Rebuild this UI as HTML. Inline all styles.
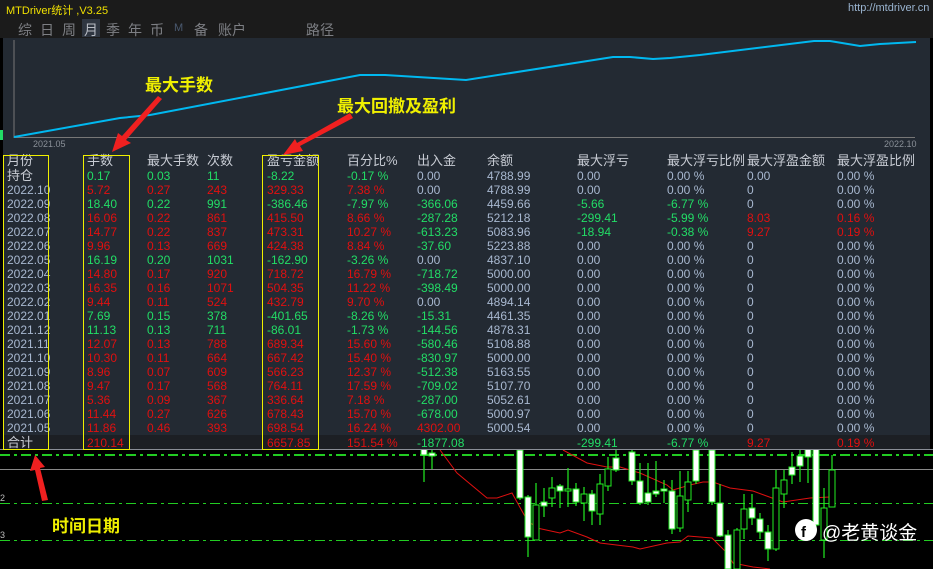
<!DOCTYPE html>
<html><head><meta charset="utf-8"><style>
*{margin:0;padding:0;box-sizing:border-box}
body{width:933px;height:569px;overflow:hidden;background:#000;font-family:"Liberation Sans","Noto Sans CJK SC",sans-serif;position:relative}
.top{position:absolute;left:0;top:0;width:933px;height:38px;background:#1b1b1b}
.panel{position:absolute;left:3px;top:38px;width:927px;height:412px;background:#232a33}
.title{position:absolute;left:6px;top:2px;color:#f0e000;font-size:11px}
.url{position:absolute;left:848px;top:2px;color:#9ab4d0;font-size:11px}
.tab{position:absolute;top:20px;color:#7d7f84;font-size:14px}
.r{position:absolute;left:0;height:14px;width:930px;font-size:12px;line-height:14px;color:#a8b8d0}
.r span{position:absolute;top:0;white-space:nowrap}
.r span:nth-child(1){left:7px}.r span:nth-child(2){left:87px}.r span:nth-child(3){left:147px}
.r span:nth-child(4){left:207px}.r span:nth-child(5){left:267px}.r span:nth-child(6){left:347px}
.r span:nth-child(7){left:417px}.r span:nth-child(8){left:487px}.r span:nth-child(9){left:577px}
.r span:nth-child(10){left:667px}.r span:nth-child(11){left:747px}.r span:nth-child(12){left:837px}
.h{font-size:13px;color:#c8ccd4}
.g{color:#22dd66}.d{color:#e01010}
.g span{color:#22dd66}.d span{color:#e01010}
.r span.b{color:#a8b8d0}.r span.g{color:#22dd66}.r span.d{color:#e01010}
.box{position:absolute;border:1px solid #f0f000}
.ann{position:absolute;color:#f0f000;font-size:17px;font-weight:bold}
</style></head><body>
<div class="top"></div>
<div class="title">MTDriver统计 ,V3.25</div>
<div class="url">http://mtdriver.cn</div>
<div style="position:absolute;left:82px;top:19px;width:18px;height:18px;background:#2f3641"></div>
<span class="tab" style="left:18px">综</span><span class="tab" style="left:40px">日</span><span class="tab" style="left:62px">周</span><span class="tab" style="left:84px;color:#b8bcc4">月</span><span class="tab" style="left:106px">季</span><span class="tab" style="left:128px">年</span><span class="tab" style="left:150px">币</span><span class="tab" style="left:174px;font-size:11px;top:22px;color:#4a5a70">M</span><span class="tab" style="left:194px">备</span><span class="tab" style="left:218px">账户</span><span class="tab" style="left:306px">路径</span>
<div class="panel"></div>
<div style="position:absolute;left:0;top:130px;width:3px;height:10px;background:#22dd66"></div>
<svg style="position:absolute;left:0;top:0" width="933" height="569">
<line x1="14" y1="40" x2="14" y2="138" stroke="#777" stroke-width="1"/>
<line x1="14" y1="137.5" x2="915" y2="137.5" stroke="#777" stroke-width="1"/>
<polyline fill="none" stroke="#00b8f0" stroke-width="2" points="14,137 120,118 150,115 360,75 385,75 466,80 613,57 630,57 653,59 670,58 700,55 814,41 830,41 860,46 880,44 916,42"/>
<text x="33" y="147" fill="#8a9098" font-size="9" font-family="Liberation Sans">2021.05</text>
<text x="884" y="147" fill="#8a9098" font-size="9" font-family="Liberation Sans">2022.10</text>
</svg>
<div class="r h" style="top:154px"><span>月份</span><span>手数</span><span>最大手数</span><span>次数</span><span>盈亏金额</span><span>百分比%</span><span>出入金</span><span>余额</span><span>最大浮亏</span><span>最大浮亏比例</span><span>最大浮盈金额</span><span>最大浮盈比例</span></div>
<div class="r g" style="top:169px"><span class="b" style="font-size:13px;color:#c8ccd4">持仓</span><span>0.17</span><span>0.03</span><span>11</span><span>-8.22</span><span>-0.17 %</span><span class="b">0.00</span><span class="b">4788.99</span><span class="b">0.00</span><span class="b">0.00 %</span><span class="b">0.00</span><span class="b">0.00 %</span></div>
<div class="r d" style="top:183px"><span class="b">2022.10</span><span>5.72</span><span>0.27</span><span>243</span><span>329.33</span><span>7.38 %</span><span class="b">0.00</span><span class="b">4788.99</span><span class="b">0.00</span><span class="b">0.00 %</span><span class="b">0</span><span class="b">0.00 %</span></div>
<div class="r g" style="top:197px"><span class="b">2022.09</span><span>18.40</span><span>0.22</span><span>991</span><span>-386.46</span><span>-7.97 %</span><span>-366.06</span><span class="b">4459.66</span><span>-5.66</span><span>-6.77 %</span><span class="b">0</span><span class="b">0.00 %</span></div>
<div class="r d" style="top:211px"><span class="b">2022.08</span><span>16.06</span><span>0.22</span><span>861</span><span>415.50</span><span>8.66 %</span><span class="g">-287.28</span><span class="b">5212.18</span><span class="g">-299.41</span><span class="g">-5.99 %</span><span>8.03</span><span>0.16 %</span></div>
<div class="r d" style="top:225px"><span class="b">2022.07</span><span>14.77</span><span>0.22</span><span>837</span><span>473.31</span><span>10.27 %</span><span class="g">-613.23</span><span class="b">5083.96</span><span class="g">-18.94</span><span class="g">-0.38 %</span><span>9.27</span><span>0.19 %</span></div>
<div class="r d" style="top:239px"><span class="b">2022.06</span><span>9.96</span><span>0.13</span><span>669</span><span>424.38</span><span>8.84 %</span><span class="g">-37.60</span><span class="b">5223.88</span><span class="b">0.00</span><span class="b">0.00 %</span><span class="b">0</span><span class="b">0.00 %</span></div>
<div class="r g" style="top:253px"><span class="b">2022.05</span><span>16.19</span><span>0.20</span><span>1031</span><span>-162.90</span><span>-3.26 %</span><span class="b">0.00</span><span class="b">4837.10</span><span class="b">0.00</span><span class="b">0.00 %</span><span class="b">0</span><span class="b">0.00 %</span></div>
<div class="r d" style="top:267px"><span class="b">2022.04</span><span>14.80</span><span>0.17</span><span>920</span><span>718.72</span><span>16.79 %</span><span class="g">-718.72</span><span class="b">5000.00</span><span class="b">0.00</span><span class="b">0.00 %</span><span class="b">0</span><span class="b">0.00 %</span></div>
<div class="r d" style="top:281px"><span class="b">2022.03</span><span>16.35</span><span>0.16</span><span>1071</span><span>504.35</span><span>11.22 %</span><span class="g">-398.49</span><span class="b">5000.00</span><span class="b">0.00</span><span class="b">0.00 %</span><span class="b">0</span><span class="b">0.00 %</span></div>
<div class="r d" style="top:295px"><span class="b">2022.02</span><span>9.44</span><span>0.11</span><span>524</span><span>432.79</span><span>9.70 %</span><span class="b">0.00</span><span class="b">4894.14</span><span class="b">0.00</span><span class="b">0.00 %</span><span class="b">0</span><span class="b">0.00 %</span></div>
<div class="r g" style="top:309px"><span class="b">2022.01</span><span>7.69</span><span>0.15</span><span>378</span><span>-401.65</span><span>-8.26 %</span><span>-15.31</span><span class="b">4461.35</span><span class="b">0.00</span><span class="b">0.00 %</span><span class="b">0</span><span class="b">0.00 %</span></div>
<div class="r g" style="top:323px"><span class="b">2021.12</span><span>11.13</span><span>0.13</span><span>711</span><span>-86.01</span><span>-1.73 %</span><span>-144.56</span><span class="b">4878.31</span><span class="b">0.00</span><span class="b">0.00 %</span><span class="b">0</span><span class="b">0.00 %</span></div>
<div class="r d" style="top:337px"><span class="b">2021.11</span><span>12.07</span><span>0.13</span><span>788</span><span>689.34</span><span>15.60 %</span><span class="g">-580.46</span><span class="b">5108.88</span><span class="b">0.00</span><span class="b">0.00 %</span><span class="b">0</span><span class="b">0.00 %</span></div>
<div class="r d" style="top:351px"><span class="b">2021.10</span><span>10.30</span><span>0.11</span><span>664</span><span>667.42</span><span>15.40 %</span><span class="g">-830.97</span><span class="b">5000.00</span><span class="b">0.00</span><span class="b">0.00 %</span><span class="b">0</span><span class="b">0.00 %</span></div>
<div class="r d" style="top:365px"><span class="b">2021.09</span><span>8.96</span><span>0.07</span><span>609</span><span>566.23</span><span>12.37 %</span><span class="g">-512.38</span><span class="b">5163.55</span><span class="b">0.00</span><span class="b">0.00 %</span><span class="b">0</span><span class="b">0.00 %</span></div>
<div class="r d" style="top:379px"><span class="b">2021.08</span><span>9.47</span><span>0.17</span><span>568</span><span>764.11</span><span>17.59 %</span><span class="g">-709.02</span><span class="b">5107.70</span><span class="b">0.00</span><span class="b">0.00 %</span><span class="b">0</span><span class="b">0.00 %</span></div>
<div class="r d" style="top:393px"><span class="b">2021.07</span><span>5.36</span><span>0.09</span><span>367</span><span>336.64</span><span>7.18 %</span><span class="g">-287.00</span><span class="b">5052.61</span><span class="b">0.00</span><span class="b">0.00 %</span><span class="b">0</span><span class="b">0.00 %</span></div>
<div class="r d" style="top:407px"><span class="b">2021.06</span><span>11.44</span><span>0.27</span><span>626</span><span>678.43</span><span>15.70 %</span><span class="g">-678.00</span><span class="b">5000.97</span><span class="b">0.00</span><span class="b">0.00 %</span><span class="b">0</span><span class="b">0.00 %</span></div>
<div class="r d" style="top:421px"><span class="b">2021.05</span><span>11.86</span><span>0.46</span><span>393</span><span>698.54</span><span>16.24 %</span><span>4302.00</span><span class="b">5000.54</span><span class="b">0.00</span><span class="b">0.00 %</span><span class="b">0</span><span class="b">0.00 %</span></div>
<div style="position:absolute;left:3px;top:435px;width:927px;height:14px;background:#1c1f24"></div>
<div class="r d" style="top:436px"><span class="b" style="font-size:13px;color:#c8ccd4">合计</span><span>210.14</span><span></span><span></span><span>6657.85</span><span>151.54 %</span><span class="g">-1877.08</span><span></span><span class="g">-299.41</span><span class="g">-6.77 %</span><span>9.27</span><span>0.19 %</span></div>
<div style="position:absolute;left:0;top:449px;width:933px;height:1px;background:#8a8e96"></div>
<div class="box" style="left:3px;top:155px;width:46px;height:295px"></div>
<div class="box" style="left:83px;top:155px;width:47px;height:295px"></div>
<div class="box" style="left:262px;top:155px;width:57px;height:295px"></div>
<svg style="position:absolute;left:0;top:450px" width="933" height="119" viewBox="0 450 933 119">
<line x1="0" y1="455" x2="933" y2="455" stroke="#22cc22" stroke-width="2" stroke-dasharray="10,4,3,4"/>
<line x1="0" y1="469.5" x2="933" y2="469.5" stroke="#888" stroke-width="1"/>
<line x1="0" y1="503.5" x2="933" y2="503.5" stroke="#22cc22" stroke-width="1" stroke-dasharray="10,4,3,4"/>
<line x1="0" y1="540.5" x2="933" y2="540.5" stroke="#22cc22" stroke-width="1" stroke-dasharray="10,4,3,4"/>
<text x="0" y="501" fill="#bbb" font-size="9" font-family="Liberation Sans">2</text>
<text x="0" y="538" fill="#bbb" font-size="9" font-family="Liberation Sans">3</text>
<polyline fill="none" stroke="#e01010" stroke-width="1" points="440,450 457,473 487,498 497,498 512,493 527,520 537,528 560,533 568,530 587,537 600,543 633,547 640,549 667,543 680,542 688,536 700,537 712,538 727,553 733,563 753,567 770,569"/>
<polyline fill="none" stroke="#e01010" stroke-width="1" points="563,450 587,463 607,467 620,467 640,473 667,485 673,490 690,485 703,482 713,482 730,488 753,491 783,502 810,498 830,497"/>
<g stroke="#22ee22" stroke-width="1.2">
<line x1="424" y1="450" x2="424" y2="482"/><line x1="432" y1="445" x2="432" y2="469"/>
<line x1="520" y1="450" x2="520" y2="500"/><line x1="528" y1="495" x2="528" y2="557"/><line x1="536" y1="483" x2="536" y2="540"/><line x1="544" y1="488" x2="544" y2="517"/><line x1="552" y1="477" x2="552" y2="507"/><line x1="560" y1="484" x2="560" y2="508"/><line x1="568" y1="468" x2="568" y2="507"/><line x1="576" y1="483" x2="576" y2="506"/><line x1="584" y1="487" x2="584" y2="521"/><line x1="592" y1="490" x2="592" y2="525"/><line x1="600" y1="474" x2="600" y2="525"/><line x1="608" y1="457" x2="608" y2="491"/><line x1="616" y1="448" x2="616" y2="472"/><line x1="632" y1="440" x2="632" y2="485"/><line x1="640" y1="463" x2="640" y2="505"/><line x1="648" y1="463" x2="648" y2="505"/><line x1="656" y1="461" x2="656" y2="497"/><line x1="664" y1="480" x2="664" y2="503"/><line x1="672" y1="480" x2="672" y2="534"/><line x1="680" y1="471" x2="680" y2="532"/><line x1="688" y1="471" x2="688" y2="512"/><line x1="696" y1="440" x2="696" y2="484"/><line x1="712" y1="440" x2="712" y2="505"/><line x1="720" y1="484" x2="720" y2="537"/><line x1="728" y1="530" x2="728" y2="569"/><line x1="737" y1="528" x2="737" y2="569"/><line x1="744" y1="494" x2="744" y2="539"/><line x1="752" y1="494" x2="752" y2="525"/><line x1="760" y1="513" x2="760" y2="539"/><line x1="768" y1="525" x2="768" y2="561"/><line x1="776" y1="470" x2="776" y2="551"/><line x1="784" y1="470" x2="784" y2="508"/><line x1="792" y1="452" x2="792" y2="484"/><line x1="800" y1="450" x2="800" y2="482"/><line x1="808" y1="440" x2="808" y2="483"/><line x1="816" y1="440" x2="816" y2="527"/><line x1="824" y1="488" x2="824" y2="558"/><line x1="832" y1="455" x2="832" y2="507"/>
</g>
<g stroke="#22ee22" stroke-width="1">
<rect x="421" y="440" width="6" height="15" fill="#fff"/><rect x="429" y="453" width="6" height="3" fill="#fff"/>
<rect x="517" y="450" width="6" height="48" fill="#fff"/><rect x="525" y="497" width="6" height="40" fill="#fff"/><rect x="533" y="505" width="6" height="35" fill="#000"/><rect x="541" y="502" width="6" height="4" fill="#fff"/><rect x="549" y="488" width="6" height="10" fill="#000"/><rect x="557" y="486" width="6" height="5" fill="#fff"/><rect x="565" y="489" width="6" height="2" fill="#000"/><rect x="573" y="489" width="6" height="13" fill="#fff"/><rect x="581" y="494" width="6" height="9" fill="#000"/><rect x="589" y="494" width="6" height="17" fill="#fff"/><rect x="597" y="484" width="6" height="30" fill="#000"/><rect x="605" y="469" width="6" height="17" fill="#000"/><rect x="613" y="458" width="6" height="12" fill="#fff"/><rect x="629" y="452" width="6" height="29" fill="#fff"/><rect x="637" y="481" width="6" height="22" fill="#fff"/><rect x="645" y="493" width="6" height="9" fill="#fff"/><rect x="653" y="491" width="6" height="3" fill="#fff"/><rect x="661" y="489" width="6" height="2" fill="#fff"/><rect x="669" y="491" width="6" height="38" fill="#fff"/><rect x="677" y="496" width="6" height="32" fill="#000"/><rect x="685" y="482" width="6" height="18" fill="#000"/><rect x="693" y="450" width="6" height="31" fill="#fff"/><rect x="709" y="450" width="6" height="52" fill="#fff"/><rect x="717" y="503" width="6" height="33" fill="#fff"/><rect x="725" y="535" width="6" height="34" fill="#fff"/><rect x="734" y="530" width="6" height="39" fill="#000"/><rect x="741" y="509" width="6" height="20" fill="#000"/><rect x="749" y="508" width="6" height="10" fill="#fff"/><rect x="757" y="519" width="6" height="13" fill="#fff"/><rect x="765" y="532" width="6" height="17" fill="#fff"/><rect x="773" y="488" width="6" height="61" fill="#000"/><rect x="781" y="480" width="6" height="14" fill="#000"/><rect x="789" y="467" width="6" height="8" fill="#fff"/><rect x="797" y="456" width="6" height="10" fill="#fff"/><rect x="805" y="440" width="6" height="17" fill="#fff"/><rect x="813" y="440" width="6" height="85" fill="#fff"/><rect x="821" y="508" width="6" height="32" fill="#000"/><rect x="829" y="470" width="6" height="37" fill="#000"/>
</g>
</svg>
<svg style="position:absolute;left:0;top:0" width="933" height="569">
<polygon points="158,96 162,99 126,140 131,143 112,152 118,133 122,136" fill="#f02020"/>
<polygon points="350,113 353,118 300,146 303,151 283,155 295,139 297,143" fill="#f02020"/>
<polygon points="48,500 42,501 35,470 30,471 35,455 45,467 40,468" fill="#f02020"/>
<circle cx="806" cy="530" r="11" fill="#fff"/>
<text x="801" y="537" fill="#000" font-size="15" font-weight="bold" font-family="Liberation Sans">f</text>
</svg>
<div class="ann" style="left:145px;top:71px">最大手数</div>
<div class="ann" style="left:337px;top:92px">最大回撤及盈利</div>
<div class="ann" style="left:52px;top:512px">时间日期</div>
<div style="position:absolute;left:822px;top:518px;color:#fff;font-size:19px">@老黄谈金</div>
</body></html>
